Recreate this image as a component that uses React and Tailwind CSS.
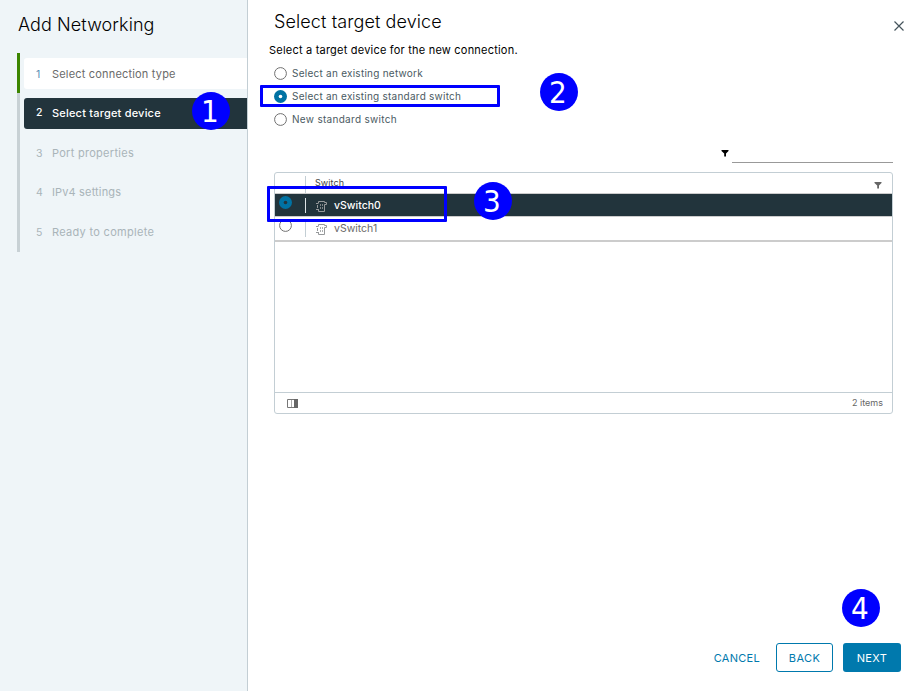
import React from "react";

const steps = [
  { n: 1, label: "Select connection type", text: "text-[#6a6a6a] tracking-[0.18px]", box: "bg-white", num: "text-[#5b8fb5]", pad: "pt-[2px]" },
  { n: 2, label: "Select target device", text: "text-white font-medium tracking-[0.2px]", box: "bg-[#22343c]", num: "text-white font-medium", pad: "" },
  { n: 3, label: "Port properties", text: "text-[#a9b4b9] tracking-[0.28px]", box: "", num: "text-[#a9b4b9]", pad: "pt-[2px]" },
  { n: 4, label: "IPv4 settings", text: "text-[#a9b4b9] tracking-[0.15px]", box: "", num: "text-[#a9b4b9]", pad: "pt-[1px]" },
  { n: 5, label: "Ready to complete", text: "text-[#a9b4b9] tracking-[0.3px]", box: "", num: "text-[#a9b4b9]", pad: "pt-[2px]" },
];

function Radio({ checked, dot = "#fff", className = "" }) {
  return (
    <svg className={"block size-[13px] shrink-0 " + className} viewBox="0 0 13 13">
      {checked ? (
        <>
          <circle cx="6.5" cy="6.5" r="6.5" fill="#0072a3" />
          <circle cx="6.5" cy="6.5" r="1.8" fill={dot} />
        </>
      ) : (
        <circle cx="6.5" cy="6.5" r="5.9" fill="#fff" stroke="#707070" strokeWidth="1" />
      )}
    </svg>
  );
}

function Funnel({ className = "" }) {
  return (
    <svg className={"block h-[7px] w-[8px] " + className} viewBox="0 0 8 7" fill="currentColor">
      <path d="M0.5 0H7.5V1L5 3.6V6.5H3.2V3.6L0.5 1Z" />
    </svg>
  );
}

function SwitchIcon() {
  return (
    <svg className="block h-[12px] w-[11px] shrink-0" viewBox="0 0 11 12" fill="none" stroke="#96999b" strokeWidth="1">
      <path d="M2.5 3V1.5H8.5V2.5H10.5V4.5H8.5V11.5H2.5V9.5" />
      <path d="M0 3.5H2.5M0 9.5H3M1.5 5V8" />
      <path d="M4.5 4V9M6.5 4V9" strokeWidth="0.8" strokeDasharray="2 1" />
    </svg>
  );
}

function Badge({ n, className }) {
  return (
    <div className={"absolute flex size-[38px] items-center justify-center rounded-full bg-[#0000ff] pr-[2px] font-['DejaVu_Sans',sans-serif] text-[31px] leading-[38px] text-white " + className}>
      <span className="block scale-x-90">{n}</span>
    </div>
  );
}

function Option({ label, checked, className }) {
  return (
    <div className="flex h-[23px] items-center gap-[5px]">
      <Radio checked={checked} />
      <span className={"whitespace-nowrap text-[10px] leading-[23px] text-[#4a5a62] " + className}>{label}</span>
    </div>
  );
}

export default function App() {
  return (
    <div className="relative flex h-[691px] w-[916px] overflow-hidden bg-white font-['Inter',sans-serif]">
      <aside className="flex w-[248px] shrink-0 flex-col border-r border-[#c3ced4] bg-[#eff5f8]">
        <h1 className="mt-[12px] ml-[18px] h-[26px] whitespace-nowrap text-[18px] leading-[26px] font-light tracking-[0.08px] text-black">Add Networking</h1>
        <div className="mt-[15px] ml-[17px] flex">
          <div className="flex w-[3px] flex-col">
            <div className="h-[40px] bg-[#3c8500]" />
            <div className="h-[159px] bg-[#c8d1d5]" />
          </div>
          <div className="ml-[4px] flex flex-1 flex-col gap-[8.5px] pt-[5px]">
            {steps.map((s) => (
              <div key={s.n} className={"flex h-[31px] items-center rounded-l-[3px] text-[11px] " + s.box + " " + s.pad}>
                <span className={"ml-[12px] w-[16px] text-[10.5px] " + s.num}>{s.n}</span>
                <span className={"whitespace-nowrap " + s.text}>{s.label}</span>
              </div>
            ))}
          </div>
        </div>
      </aside>

      <main className="flex flex-1 flex-col">
        <div className="flex h-[38px] justify-between pt-[9px]">
          <h2 className="ml-[26px] whitespace-nowrap text-[18px] leading-[26px] font-light tracking-[0.1px] text-black">Select target device</h2>
          <svg className="mt-[12px] mr-[12px] block size-[10px]" viewBox="0 0 10 10" stroke="#45545c" strokeWidth="1.2">
            <path d="M0.5 0.5L9.5 9.5M9.5 0.5L0.5 9.5" />
          </svg>
        </div>
        <p className="ml-[21px] h-[24px] whitespace-nowrap text-[11px] leading-[24px] tracking-[0.21px] text-black">Select a target device for the new connection.</p>
        <div className="ml-[26px] flex flex-col">
          <Option label="Select an existing network" className="tracking-[0.25px]" />
          <Option label="Select an existing standard switch" checked className="tracking-[0.24px]" />
          <Option label="New standard switch" className="tracking-[0.3px]" />
        </div>
        <div className="mr-[23px] flex h-[32px] items-end justify-end">
          <Funnel className="mb-[6px] text-black" />
          <div className="ml-[3px] h-px w-[161px] bg-[#999]" />
        </div>

        <section className="mt-[9px] ml-[26px] flex h-[242px] w-[619px] flex-col rounded-[3px] border border-[#c3ced4]">
          <div className="flex h-[20px] items-center">
            <div className="mt-[3px] h-[17px] w-[31px] border-r border-[#c3ced4]" />
            <span className="ml-[9px] flex-1 text-[9px] leading-[20px] tracking-[0.1px] text-[#454545]">Switch</span>
            <Funnel className="mt-[4px] mr-[10px] text-[#666]" />
          </div>
          <div className="flex h-[24px] border-t border-b border-[#ccc] bg-[#22343c]">
            <div className="mt-[4px] h-[15px] w-[31px] border-r border-[#dce3e6] pl-[4px]">
              <Radio checked dot="#22343c" className="-mt-[2px]" />
            </div>
            <div className="flex items-center gap-[7px] pl-[10px] pt-[1px] text-[10.5px] font-medium text-white">
              <SwitchIcon />
              <span>vSwitch0</span>
            </div>
          </div>
          <div className="flex h-[25px] border-b-2 border-[#ccc]">
            <div className="mt-[3px] h-[17px] w-[31px] border-r border-[#c3ced4] pl-[4px]">
              <Radio className="-mt-px" />
            </div>
            <div className="flex items-center gap-[7px] pl-[10px] pt-[1px] text-[10.5px] text-[#6a6a6a]">
              <SwitchIcon />
              <span>vSwitch1</span>
            </div>
          </div>
          <div className="flex-1" />
          <div className="flex h-[21px] items-center justify-between border-t border-[#c3ced4] pr-[9px] pl-[12px]">
            <svg className="block h-[9px] w-[11px]" viewBox="0 0 11 9">
              <path d="M0.5 0.5H10.5V8.5H0.5Z" fill="none" stroke="#777" />
              <path d="M4.5 1V8" fill="none" stroke="#aaa" />
              <path d="M7 0H11V9H7Z" fill="#666" />
            </svg>
            <span className="text-[9px] leading-[20px] text-[#666]">2 items</span>
          </div>
        </section>

        <div className="flex-1" />
        <footer className="mr-[15px] mb-[19px] flex h-[29px] justify-end text-[11px] text-[#0079ad]">
          <button className="mr-[16px] pt-[2px] tracking-[0.3px]">CANCEL</button>
          <button className="mr-[10px] flex w-[57px] items-center justify-center rounded-[3px] border border-[#0079ad] pt-[2px] tracking-[0.4px]">BACK</button>
          <button className="flex w-[58px] items-center justify-center rounded-[3px] bg-[#0079ad] pt-[2px] tracking-[0.4px] text-white">NEXT</button>
        </footer>
      </main>

      <div className="absolute top-[85px] left-[260px] h-[22px] w-[240px] rounded-[1px] border-[3px] border-[#0000ff]" />
      <div className="absolute top-[186px] left-[267px] h-[36px] w-[180px] rounded-[1px] border-[3px] border-[#0000ff]" />
      <Badge n={1} className="top-[92px] left-[192px]" />
      <Badge n={2} className="top-[73px] left-[540px]" />
      <Badge n={3} className="top-[182px] left-[474px]" />
      <Badge n={4} className="top-[589px] left-[842px]" />
    </div>
  );
}
